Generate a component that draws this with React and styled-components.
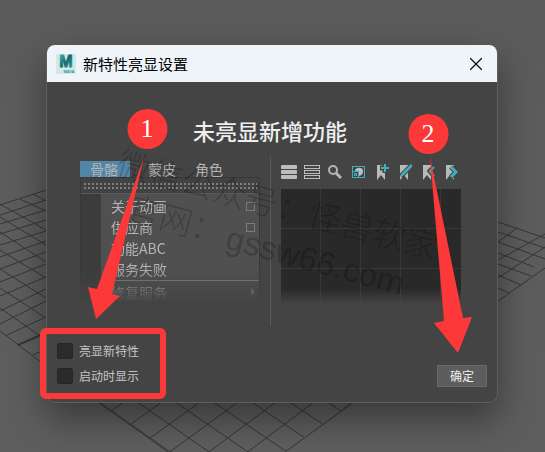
import React, { useState } from 'react'
import styled, { createGlobalStyle } from 'styled-components'

const menuItems = [
  { label: '关于动画', box: true },
  { label: '供应商', box: true },
  { label: '功能ABC' },
  { label: '服务失败' },
  { label: '修复服务', arrow: true, split: true },
]

const tabs = ['骨骼', '蒙皮', '角色']

function MayaLogo() {
  return (
    <svg width="20" height="20" viewBox="0 0 20 20">
      <defs>
        <linearGradient id="teal" x1="0" y1="0" x2="1" y2="1">
          <stop offset="0" stopColor="#4fb5b5" />
          <stop offset="0.5" stopColor="#14696e" />
          <stop offset="1" stopColor="#35a69c" />
        </linearGradient>
      </defs>
      <rect width="20" height="20" fill="#d3e8e7" />
      <text x="10" y="13" textAnchor="middle" fontFamily="Liberation Sans, sans-serif" fontSize="16" fontWeight="700" fill="url(#teal)" stroke="url(#teal)" strokeWidth="1">M</text>
      <text x="13" y="19" textAnchor="middle" fontFamily="Liberation Sans, sans-serif" fontSize="4" fontWeight="700" fill="#2a9d98">MAYA</text>
    </svg>
  )
}

const flag = 'M4 2h8v15l-4-5-4 5z'

const tools = [
  {
    name: '实心列表',
    art: <g fill="#bdbdbd"><rect y="2" width="16" height="4" rx="1" /><rect y="7" width="16" height="4" rx="1" /><rect y="12" width="16" height="4" rx="1" /></g>,
  },
  {
    name: '空心列表',
    art: <g fill="none" stroke="#bdbdbd"><rect x=".5" y="2.500" width="15" height="3" /><rect x=".5" y="7.500" width="15" height="3" /><rect x=".5" y="12.500" width="15" height="3" /></g>,
  },
  {
    name: '搜索',
    art: <g fill="none" stroke="#b4b4b4"><circle cx="6" cy="7" r="4" strokeWidth="2" /><path d="M9 10l5 5" strokeWidth="3" /></g>,
  },
  {
    name: '框显',
    art: <g fill="none"><rect x="2.500" y="3.500" width="12" height="11" stroke="#41adb8" /><path d="M5 7c2-3 8-3 8 1 0 3-1 4-4 5V9H6z" fill="#bdbdbd" /><rect x="2.500" y="8.500" width="6" height="6" fill="#444" stroke="#41adb8" /><rect x="4.500" y="10.500" width="2" height="2" stroke="#41adb8" /></g>,
  },
  {
    name: '添加书签',
    art: <g><path d={flag} fill="#b9b9b9" /><path d="M7 5h9M12 0v10" stroke="#444" strokeWidth="5" /><path d="M8 5h8M12 1v8" stroke="#41adb8" strokeWidth="2" /></g>,
  },
  {
    name: '编辑书签',
    art: <g><path d={flag} fill="#b9b9b9" /><path d="M5 13L16 2" stroke="#444" strokeWidth="5" /><path d="M6 12L16 2" stroke="#41adb8" strokeWidth="3" /><path d="M4 14l1-3 2 2z" fill="#41adb8" /></g>,
  },
  {
    name: '上一个书签',
    art: <g><path d={flag} fill="#b9b9b9" /><path d="M15 4l-4 4 4 5" stroke="#444" strokeWidth="5" fill="none" /><path d="M15 4l-4 4 4 5" stroke="#41adb8" strokeWidth="2" fill="none" /></g>,
  },
  {
    name: '下一个书签',
    art: <g><path d={flag} fill="#b9b9b9" /><path d="M9 4l5 5-5 5" stroke="#444" strokeWidth="5" fill="none" /><path d="M9 4l5 5-5 5" stroke="#41adb8" strokeWidth="3" fill="none" /></g>,
  },
]

// perspective floor of the 3D viewport, seen around the dialog
const floorLines = [
  'M0 205L46 190M0 215L46 200M0 224L46 210M0 234L46 220M0 245L46 231M0 257L46 241M0 269L46 252M0 282L46 264M0 296L46 277M0 311L46 289M0 324L46 301M5 336L46 317M33 355L46 349',
  'M33 194L46 201M20 199L46 211M0 204L46 230M0 217L46 245M0 232L46 262M0 250L46 278M0 269L46 298M0 288L46 318M0 308L46 340M0 331L46 366',
  'M498 222L545 238M498 232L545 248M498 242L545 259M498 253L534 267M498 264L531 276M498 275L521 285M498 288L509 293',
  'M498 242L517 228M498 260L545 234M498 278L545 247M498 301L545 268',
]

function Floor() {
  const cols = [0, 1, 2, 3, 4, 5, 6]
  return (
    <FloorSvg viewBox="0 0 545 452" fill="none" stroke="#363636">
      <clipPath id="floor">
        <path d="M85 392L170 453H282L366 392z" />
      </clipPath>
      {floorLines.map((d) => <path key={d} d={d} />)}
      <path d="M18 345L41 335" strokeWidth="2" />
      <g clipPath="url(#floor)">
        {cols.map((i) => (
          <path key={i} d={`M${95 + i * 38} 399L${173 + i * 39} 454M${128 + i * 38} 399L${50 + i * 39} 454`} />
        ))}
      </g>
      <path d="M98 402L168 452M354 402L285 452" />
    </FloorSvg>
  )
}

function Menu() {
  const [active, setActive] = useState(0)
  return (
    <Left>
      <Tabs>
        {tabs.map((t, i) => (
          <Tab key={t} $active={i === active} onClick={() => setActive(i)}>{t}</Tab>
        ))}
      </Tabs>
      <Panel>
        <Dots />
        <Items>
          {menuItems.map((item) => (
            <Item key={item.label} $split={item.split}>
              {item.label}
              {item.box && <Box />}
              {item.arrow && <Arrow />}
            </Item>
          ))}
        </Items>
      </Panel>
    </Left>
  )
}

function Callouts() {
  return (
    <Overlay viewBox="0 0 545 452">
      <g fill="#000" opacity="0.2" fontWeight="300">
        <text transform="translate(115 174) rotate(15)" fontSize="33">微信公众号：怪兽软家</text>
        <text transform="translate(125 219) rotate(15)" fontSize="33">官网：</text>
        <text transform="translate(224 248) rotate(15)" fontSize="33" fontFamily="Liberation Sans, sans-serif">gssw66.com</text>
      </g>
      <g fill="#fc3838">
        <circle cx="147.500" cy="129" r="20" />
        <circle cx="428.500" cy="134" r="20" />
        <path d="M144 157L112 294L120 296L96 319L88 287L97 289z" />
        <path d="M430 157L463 318L472 317L458 353L434 323L444 321z" />
      </g>
      <rect x="43" y="331" width="120" height="65" rx="3" fill="none" stroke="#fc3838" strokeWidth="6" />
      <g fill="#fff" fontFamily="Liberation Serif, serif" fontSize="26" textAnchor="middle">
        <text x="147" y="137">1</text>
        <text x="428" y="142">2</text>
      </g>
    </Overlay>
  )
}

function App() {
  return (
    <Page>
      <GlobalStyle />
      <Floor />
      <Dialog>
        <TitleBar>
          <MayaLogo />
          <Title>新特性亮显设置</Title>
          <Close aria-label="关闭">
            <svg width="12" height="12" viewBox="0 0 12 12" stroke="#111" strokeWidth="1.300"><path d="M0 0L12 12M12 0L0 12" /></svg>
          </Close>
        </TitleBar>
        <Heading>未亮显新增功能</Heading>
        <Preview>
          <Menu />
          <Right>
            <Toolbar>
              {tools.map((t) => (
                <Tool key={t.name} aria-label={t.name}>
                  <svg width="16" height="18" viewBox="0 0 16 18">{t.art}</svg>
                </Tool>
              ))}
            </Toolbar>
            <Graph />
          </Right>
        </Preview>
        <Footer>
          <Checks>
            <Label><Check type="checkbox" />亮显新特性</Label>
            <Label><Check type="checkbox" />启动时显示</Label>
          </Checks>
          <Confirm>确定</Confirm>
        </Footer>
      </Dialog>
      <Callouts />
    </Page>
  )
}

const GlobalStyle = createGlobalStyle`
* {
  box-sizing: border-box;
}
body {
  margin: 0;
  background: #5c5c5c;
  font-family: "Noto Sans CJK SC", sans-serif;
}
button {
  font-family: inherit;
  border: none;
  padding: 0;
  background: none;
}
`
const Page = styled.div`
position: relative;
min-height: 100vh;
padding: 45px 47px 49px 46px;
overflow: hidden;
background: linear-gradient(#5b5b5b, #5e5e5e);
`
const FloorSvg = styled.svg`
position: absolute;
top: 0;
left: 0;
width: 100%;
`
const Overlay = styled.svg`
position: absolute;
top: 0;
left: 0;
width: 100%;
pointer-events: none;
`
const Dialog = styled.main`
position: relative;
border: 1px solid #5f5f5f;
border-top: none;
border-radius: 9px;
background: #444;
box-shadow: 0 16px 36px rgba(0, 0, 0, 0.4);
`
const TitleBar = styled.header`
display: flex;
align-items: center;
height: 37px;
padding: 0 15px 0 9px;
border-radius: 8px 8px 0 0;
background: #eff4f8;
`
const Title = styled.span`
flex: 1;
margin-left: 7px;
font-size: 15px;
line-height: 20px;
color: #000;
`
const Close = styled.button`
display: flex;
`
const Heading = styled.h1`
margin: 0;
padding: 32px 4px 10px 0;
text-align: center;
font-size: 22px;
font-weight: 500;
line-height: 32px;
color: #eee;
`
const Preview = styled.section`
display: flex;
height: 170px;
padding: 0 36px 0 33px;
`
const Left = styled.div`
flex: 190;
padding: 5px 10px 0 0;
border-right: 1px solid #5a5a5a;
`
const Tabs = styled.nav`
display: flex;
gap: 1px;
`
const Tab = styled.button`
height: 16px;
margin-right: ${(props) => (props.$active ? '8px' : '0')};
padding: ${(props) => (props.$active ? '0 12px 0 10px' : '0 9px')};
font-size: 14px;
line-height: 16px;
color: #b4b4b4;
background: ${(props) => (props.$active ? '#5285a6' : 'none')};
`
const Panel = styled.div`
border: 1px solid #383838;
border-bottom: none;
background: #424242;
box-shadow: 2px 0 2px #3a3a3a;
mask-image: linear-gradient(#000 72%, transparent);
`
const Dots = styled.div`
height: 15px;
border: 4px solid #424242;
border-left-width: 2px;
border-right-width: 2px;
background: radial-gradient(circle, #808080 30%, transparent 45%) 0 0 / 4px 4px;
`
const Items = styled.ul`
list-style: none;
margin: 0;
padding: 2px 0 0;
border-top: 1px solid #5a5a5a;
background: linear-gradient(90deg, #3c3c3c 20px, #505050 20px);
`
const Item = styled.li`
display: flex;
align-items: center;
justify-content: space-between;
height: ${(props) => (props.$split ? '23px' : '21px')};
margin-left: 20px;
padding: 0 4px 0 10px;
border-top: ${(props) => (props.$split ? '1px solid #888' : 'none')};
font-size: 14px;
line-height: 21px;
color: #b4b4b4;
`
const Box = styled.span`
width: 9px;
height: 9px;
border: 1px solid #7c7c7c;
`
const Arrow = styled.span`
border: 4px solid transparent;
border-left-color: #999;
border-right: none;
`
const Right = styled.div`
flex: 190;
padding: 7px 0 0 10px;
`
const Toolbar = styled.div`
display: flex;
gap: 7px;
`
const Tool = styled.button`
display: flex;
`
const Graph = styled.div`
height: 115px;
margin-top: 8px;
background:
  repeating-linear-gradient(90deg, transparent 0 39px, #383838 39px 40px),
  repeating-linear-gradient(transparent 0 39px, #383838 39px 40px),
  #292929;
mask-image: linear-gradient(#000 86%, transparent);
`
const Footer = styled.footer`
display: flex;
justify-content: space-between;
align-items: flex-end;
padding: 17px 10px 15px 10px;
`
const Checks = styled.div`
display: flex;
flex-direction: column;
gap: 9px;
padding-bottom: 3px;
`
const Label = styled.label`
display: flex;
align-items: center;
gap: 6px;
font-size: 12px;
line-height: 16px;
color: #c4c4c4;
`
const Check = styled.input`
appearance: none;
width: 16px;
height: 16px;
margin: 0;
border: 1px solid #262626;
border-radius: 2px;
background: #2b2b2b;
`
const Confirm = styled.button`
width: 50px;
height: 22px;
border: 1px solid #686868;
border-radius: 1px;
background: #5d5d5d;
font-size: 12px;
line-height: 20px;
color: #eee;
`

export default App
